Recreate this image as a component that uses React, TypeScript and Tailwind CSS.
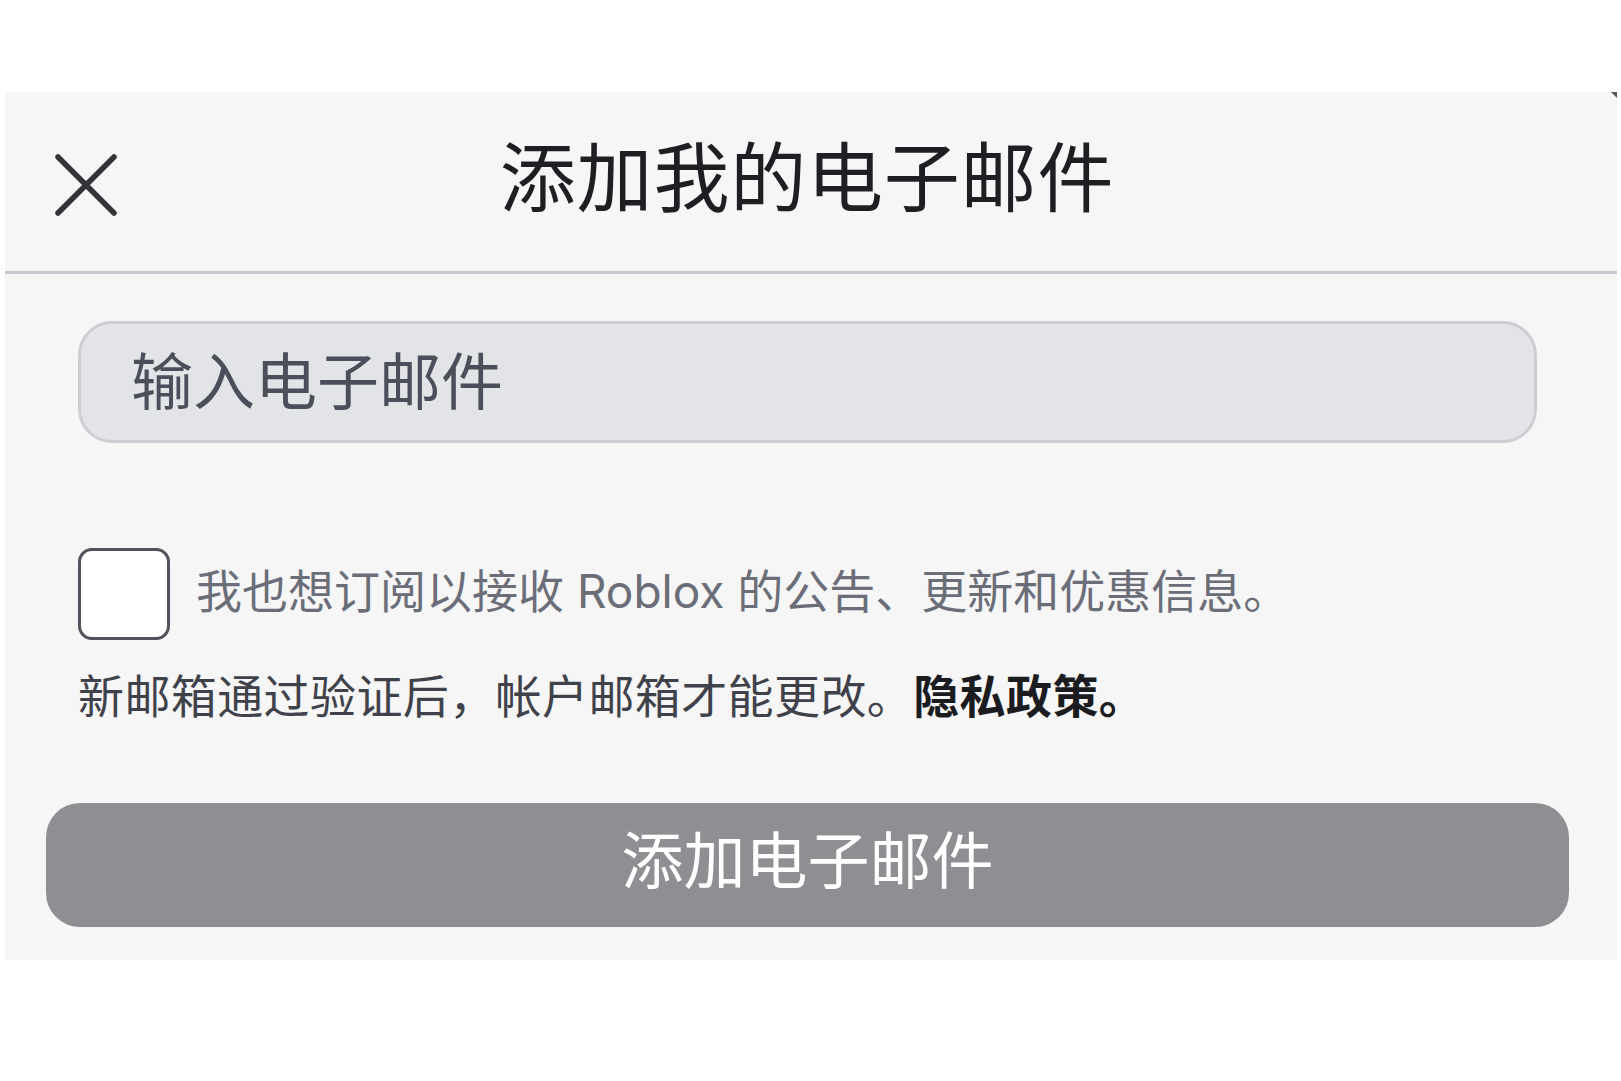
import React from "react";

function CloseIcon() {
  return (
    <svg width="62" height="62" viewBox="0 0 62 62" fill="none">
      <path
        d="M3 3 L59 59 M59 3 L3 59"
        stroke="#333438"
        strokeWidth="5.5"
        strokeLinecap="round"
      />
    </svg>
  );
}

export default function App() {
  return (
    <div className="min-h-[1081px] w-[1621px] bg-white overflow-hidden font-['Inter','Noto_Sans_CJK_SC',sans-serif]">
      <div className="relative mt-[92px] ml-[5px] w-[1612px] h-[868px] bg-[#f6f6f6] flex flex-col">
        {/* corner marker */}
        <svg
          className="absolute right-0 top-0"
          width="6"
          height="6"
          viewBox="0 0 6 6"
        >
          <path d="M0 0 L6 0 L6 6 Z" fill="#55575c" />
        </svg>

        {/* header */}
        <div className="h-[182px] border-b-[3px] border-[#c6c7cf] grid grid-cols-[1fr_auto_1fr] items-center pr-[8px]">
          <div className="pl-[50px] mt-[7px] flex items-center">
            <CloseIcon />
          </div>
          <h1 className="mb-[8px] text-[76px] leading-[90px] tracking-[0.8px] font-normal text-[#1e1f23] whitespace-nowrap">
            添加我的电子邮件
          </h1>
          <div />
        </div>

        <div className="pl-[73px] flex flex-col">
          <input
            type="email"
            placeholder="输入电子邮件"
            className="mt-[47px] h-[122px] w-[1459px] rounded-[34px] border-[3px] border-[#cdced4] bg-[#e3e4e8] pl-[50px] text-[62px] text-[#1e1f23] placeholder:text-[#4b4f5a] outline-none"
          />

          <label className="mt-[105px] h-[92px] flex items-center gap-[26px]">
            <span className="w-[92px] h-[92px] shrink-0 rounded-[14px] border-[3px] border-[#50535c] bg-white" />
            <span className="mb-[6px] text-[46px] leading-[60px] text-[#6b6e78] whitespace-nowrap">
              我也想订阅以接收 Roblox 的公告、更新和优惠信息。
            </span>
          </label>

          <p className="mt-[26px] text-[46px] leading-[60px] tracking-[0.4px] text-[#3f424a] whitespace-nowrap">
            新邮箱通过验证后，帐户邮箱才能更改。
            <span className="font-semibold text-[#1b1c1f]">隐私政策。</span>
          </p>
        </div>

        <button
          type="button"
          className="mt-[77px] ml-[41px] w-[1523px] h-[124px] shrink-0 rounded-[34px] bg-[#8e8f93] text-white text-[62px] leading-[80px] pb-[6px] flex items-center justify-center"
        >
          添加电子邮件
        </button>
      </div>
    </div>
  );
}
